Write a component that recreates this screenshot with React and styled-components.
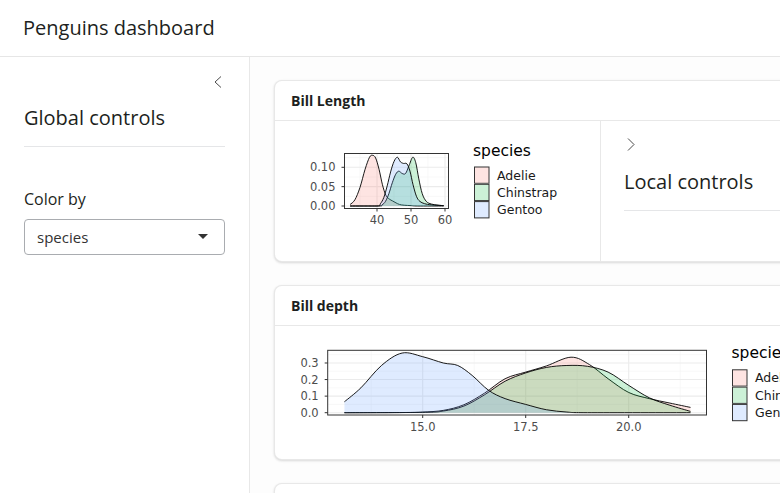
// Penguins dashboard (bslib-style layout with ggplot density charts)
import styled, { createGlobalStyle } from "styled-components";

const COLORS = {
  Adelie: "#F8766D",
  Chinstrap: "#00BA38",
  Gentoo: "#619CFF",
};

const SPECIES = ["Adelie", "Chinstrap", "Gentoo"];

// density curves as [value, density] control points
const billLength = {
  box: { x: 274, y: 121, w: 325, h: 140 },
  x: (v) => 376 + (v - 40) * 3.4,
  y: (d) => 206 - d * 387,
  panel: { x0: 343.5, x1: 447.5, y0: 153.5, y1: 208.5 },
  xMajor: [
    [40, "40"],
    [50, "50"],
    [60, "60"],
  ],
  xMinor: [35, 45, 55],
  yMajor: [
    [0, "0.00"],
    [0.05, "0.05"],
    [0.1, "0.10"],
  ],
  yMinor: [0.025, 0.075, 0.125],
  legend: { titleX: 472, titleY: 155.5, keyX: 473, keyY: 166.5, labelX: 496 },
  series: {
    Adelie: [
      [32.1, 0.004], [33.5, 0.016], [35, 0.048], [36.5, 0.095], [37.8, 0.126],
      [38.7, 0.131], [39.6, 0.124], [40.6, 0.095], [41.6, 0.055], [42.6, 0.028],
      [43.6, 0.018], [44.6, 0.013], [45.6, 0.008], [46.6, 0.004], [48, 0.002],
      [50, 0.001], [52, 0], [59.6, 0],
    ],
    Chinstrap: [
      [32.1, 0], [40.5, 0], [41.5, 0.003], [42.5, 0.012], [43.5, 0.032],
      [44.5, 0.06], [45.5, 0.082], [46.4, 0.09], [47.4, 0.084], [48.4, 0.084],
      [49.4, 0.104], [50.5, 0.126], [51.4, 0.112], [52.3, 0.07], [53.3, 0.032],
      [54.5, 0.012], [56, 0.005], [58, 0.002], [59.6, 0.001],
    ],
    Gentoo: [
      [32.1, 0], [40, 0], [41, 0.006], [42, 0.022], [43, 0.052], [44, 0.088],
      [45, 0.115], [46, 0.126], [46.9, 0.114], [47.8, 0.11], [48.8, 0.109],
      [49.7, 0.09], [50.6, 0.055], [51.6, 0.025], [52.6, 0.012], [54, 0.006],
      [56, 0.003], [59.6, 0.001],
    ],
  },
};

const billDepth = {
  box: { x: 274, y: 325, w: 538, h: 134 },
  x: (v) => 421.7 + (v - 15) * 41.2,
  y: (d) => 411.7 - d * 165.7,
  panel: { x0: 326.7, x1: 705.5, y0: 349.3, y1: 414 },
  xMajor: [
    [15, "15.0"],
    [17.5, "17.5"],
    [20, "20.0"],
  ],
  xMinor: [13.75, 16.25, 18.75, 21.25],
  yMajor: [
    [0, "0.0"],
    [0.1, "0.1"],
    [0.2, "0.2"],
    [0.3, "0.3"],
  ],
  yMinor: [0.05, 0.15, 0.25, 0.35],
  legend: { titleX: 730.5, titleY: 357, keyX: 731, keyY: 368.3, labelX: 754 },
  series: {
    Adelie: [
      [13.1, 0], [14.5, 0.001], [15, 0.004], [15.5, 0.014], [16, 0.048],
      [16.5, 0.118], [17, 0.205], [17.5, 0.245], [18, 0.282], [18.6, 0.335],
      [19.05, 0.29], [19.5, 0.205], [20, 0.122], [20.5, 0.085], [21, 0.058],
      [21.5, 0.032],
    ],
    Chinstrap: [
      [13.1, 0], [15, 0.002], [15.5, 0.01], [16, 0.04], [16.5, 0.108],
      [17, 0.19], [17.5, 0.24], [18, 0.273], [18.5, 0.285], [19, 0.28],
      [19.5, 0.245], [20, 0.165], [20.5, 0.09], [21, 0.045], [21.5, 0.008],
    ],
    Gentoo: [
      [13.1, 0.066], [13.5, 0.15], [14, 0.285], [14.5, 0.36], [15, 0.338],
      [15.5, 0.3], [15.85, 0.285], [16.2, 0.225], [16.6, 0.135], [17, 0.085],
      [17.5, 0.05], [18, 0.018], [18.5, 0.004], [19, 0], [21.5, 0],
    ],
  },
};

const smoothPath = (pts, base) => {
  const f = (n) => n.toFixed(2);
  let d = `M${f(pts[0][0])},${f(pts[0][1])}`;
  for (let i = 0; i < pts.length - 1; i++) {
    const p0 = pts[i - 1] || pts[i];
    const p1 = pts[i];
    const p2 = pts[i + 1];
    const p3 = pts[i + 2] || p2;
    const c1x = p1[0] + (p2[0] - p0[0]) / 6;
    const c1y = Math.min(base, p1[1] + (p2[1] - p0[1]) / 6);
    const c2x = p2[0] - (p3[0] - p1[0]) / 6;
    const c2y = Math.min(base, p2[1] - (p3[1] - p1[1]) / 6);
    d += ` C${f(c1x)},${f(c1y)} ${f(c2x)},${f(c2y)} ${f(p2[0])},${f(p2[1])}`;
  }
  return d;
};

const DensityPlot = ({ spec }) => {
  const { box, x, y, panel, legend } = spec;
  const base = y(0);
  return (
    <PlotSvg
      width={box.w}
      height={box.h}
      viewBox={`${box.x} ${box.y} ${box.w} ${box.h}`}
    >
      <rect
        x={panel.x0}
        y={panel.y0}
        width={panel.x1 - panel.x0}
        height={panel.y1 - panel.y0}
        fill="#fff"
      />
      {spec.xMinor.map((v) => (
        <line key={`xm${v}`} x1={x(v)} x2={x(v)} y1={panel.y0} y2={panel.y1} stroke="#f3f3f3" strokeWidth="0.6" />
      ))}
      {spec.yMinor.map((v) => (
        <line key={`ym${v}`} x1={panel.x0} x2={panel.x1} y1={y(v)} y2={y(v)} stroke="#f3f3f3" strokeWidth="0.6" />
      ))}
      {spec.xMajor.map(([v]) => (
        <line key={`xM${v}`} x1={x(v)} x2={x(v)} y1={panel.y0} y2={panel.y1} stroke="#ebebeb" strokeWidth="1.1" />
      ))}
      {spec.yMajor.map(([v]) => (
        <line key={`yM${v}`} x1={panel.x0} x2={panel.x1} y1={y(v)} y2={y(v)} stroke="#ebebeb" strokeWidth="1.1" />
      ))}

      {SPECIES.map((s) => {
        const pts = spec.series[s].map(([v, d]) => [x(v), y(d)]);
        const line = smoothPath(pts, base);
        const first = pts[0];
        const last = pts[pts.length - 1];
        return (
          <g key={s}>
            <path
              d={`${line} L${last[0]},${base} L${first[0]},${base} Z`}
              fill={COLORS[s]}
              fillOpacity="0.2"
            />
            <path d={line} fill="none" stroke="#000" strokeWidth="0.9" />
          </g>
        );
      })}

      <rect
        x={panel.x0}
        y={panel.y0}
        width={panel.x1 - panel.x0}
        height={panel.y1 - panel.y0}
        fill="none"
        stroke="#333"
        strokeWidth="1"
      />

      {spec.yMajor.map(([v, label]) => (
        <g key={`yl${v}`}>
          <line x1={panel.x0 - 3} x2={panel.x0} y1={y(v)} y2={y(v)} stroke="#333" strokeWidth="1" />
          <AxisText x={panel.x0 - 9} y={y(v) + 4} textAnchor="end">
            {label}
          </AxisText>
        </g>
      ))}
      {spec.xMajor.map(([v, label]) => (
        <g key={`xl${v}`}>
          <line x1={x(v)} x2={x(v)} y1={panel.y1} y2={panel.y1 + 3} stroke="#333" strokeWidth="1" />
          <AxisText x={x(v)} y={panel.y1 + 15.5} textAnchor="middle">
            {label}
          </AxisText>
        </g>
      ))}

      <LegendTitle x={legend.titleX} y={legend.titleY}>
        species
      </LegendTitle>
      {SPECIES.map((s, i) => (
        <g key={`lg${s}`}>
          <rect
            x={legend.keyX}
            y={legend.keyY + i * 17.3}
            width={15.5}
            height={17.3}
            fill="#fff"
          />
          <rect
            x={legend.keyX + 0.5}
            y={legend.keyY + i * 17.3 + 0.5}
            width={14.5}
            height={16.3}
            fill={COLORS[s]}
            fillOpacity="0.2"
            stroke="#333"
            strokeWidth="1"
          />
          <LegendLabel x={legend.labelX} y={legend.keyY + i * 17.3 + 13}>
            {s}
          </LegendLabel>
        </g>
      ))}
    </PlotSvg>
  );
};

const ChevronLeft = () => (
  <ToggleSvg width="8" height="12" viewBox="0 0 8 12">
    <polyline points="7,0.5 1,6 7,11.5" />
  </ToggleSvg>
);

const ChevronRight = () => (
  <ToggleSvg width="8" height="13" viewBox="0 0 8 13">
    <polyline points="1,0.5 7,6.5 1,12.5" />
  </ToggleSvg>
);

const App = () => {
  return (
    <>
      <GlobalStyle />
      <Page>
        <Header>
          <Title>Penguins dashboard</Title>
        </Header>
        <Layout>
          <Sidebar>
            <ToggleRow>
              <ChevronLeft />
            </ToggleRow>
            <SidebarTitle>Global controls</SidebarTitle>
            <Divider />
            <FieldLabel>Color by</FieldLabel>
            <Select>
              <span>species</span>
              <Caret />
            </Select>
          </Sidebar>
          <Main>
            <Card>
              <CardHeader>Bill Length</CardHeader>
              <CardBody $height={140}>
                <PlotArea>
                  <DensityPlot spec={billLength} />
                </PlotArea>
                <InnerSidebar>
                  <InnerToggle>
                    <ChevronRight />
                  </InnerToggle>
                  <SidebarTitle>Local controls</SidebarTitle>
                  <Divider />
                </InnerSidebar>
              </CardBody>
            </Card>
            <Card>
              <CardHeader>Bill depth</CardHeader>
              <CardBody $height={133}>
                <PlotArea>
                  <DensityPlot spec={billDepth} />
                </PlotArea>
              </CardBody>
            </Card>
            <Card>
              <CardHeader>Flipper length</CardHeader>
              <CardBody $height={140} />
            </Card>
          </Main>
        </Layout>
      </Page>
    </>
  );
};

export default App;

const GlobalStyle = createGlobalStyle`
  html, body {
    margin: 0;
    padding: 0;
    overflow: hidden;
    background: #fff;
  }
  body {
    font-family: "Open Sans", "Liberation Sans", sans-serif;
    color: #1d1f21;
  }
`;

const Page = styled.div`
  width: 780px;
  height: 493px;
  display: flex;
  flex-direction: column;
  overflow: hidden;
`;

const Header = styled.header`
  height: 56px;
  flex-shrink: 0;
  display: flex;
  align-items: center;
  padding-left: 23px;
  border-bottom: 1px solid #e6e6e6;
  background: #fff;
`;

const Title = styled.h1`
  margin: 0;
  font-size: 20px;
  font-weight: 400;
  line-height: 24px;
  color: #1d1f21;
`;

const Layout = styled.div`
  flex: 1;
  display: grid;
  grid-template-columns: 250px 1fr;
  min-height: 0;
`;

const Sidebar = styled.aside`
  display: flex;
  flex-direction: column;
  padding: 0 24px;
  border-right: 1px solid #e8e8e8;
  background: #fff;
`;

const ToggleRow = styled.div`
  display: flex;
  justify-content: flex-end;
  padding-right: 3px;
  margin-top: 19px;
  margin-bottom: 18px;
`;

const ToggleSvg = styled.svg`
  display: block;
  fill: none;
  stroke: #4a4a4a;
  stroke-width: 1;
`;

const SidebarTitle = styled.h2`
  margin: 0;
  font-size: 20px;
  font-weight: 400;
  line-height: 24px;
  color: #1d1f21;
  white-space: nowrap;
`;

const Divider = styled.hr`
  margin: 16px 0 0;
  border: 0;
  border-top: 1px solid #e5e6e8;
`;

const FieldLabel = styled.label`
  margin-top: 40px;
  font-size: 16px;
  line-height: 24px;
  color: #1d1f21;
`;

const Select = styled.div`
  margin-top: 8px;
  height: 36px;
  flex-shrink: 0;
  box-sizing: border-box;
  border: 1px solid #a9acb0;
  border-radius: 4px;
  display: flex;
  align-items: center;
  justify-content: space-between;
  padding: 0 16px 0 12px;
  font-size: 15px;
  color: #333;
  background: #fff;
`;

const Caret = styled.span`
  width: 0;
  height: 0;
  border-left: 5.5px solid transparent;
  border-right: 5.5px solid transparent;
  border-top: 5.5px solid #333;
  margin-top: -2px;
`;

const Main = styled.main`
  display: flex;
  flex-direction: column;
  gap: 23px;
  padding: 23px 24px;
  background: #fdfdfd;
  overflow: hidden;
  min-width: 0;
`;

const Card = styled.section`
  width: 540px;
  flex-shrink: 0;
  background: #fff;
  border: 1px solid rgba(0, 0, 0, 0.09);
  border-radius: 8px;
  box-shadow: 0 1px 3px rgba(0, 0, 0, 0.1), 0 1px 2px rgba(0, 0, 0, 0.05);
  overflow: hidden;
`;

const CardHeader = styled.div`
  height: 39px;
  display: flex;
  align-items: center;
  padding: 0 16px;
  border-bottom: 1px solid rgba(0, 0, 0, 0.09);
  font-size: 14px;
  font-weight: 700;
  color: #1d1f21;
`;

const CardBody = styled.div`
  height: ${(p) => p.$height}px;
  display: flex;
`;

const PlotArea = styled.div`
  flex: 1;
  min-width: 0;
  overflow: hidden;
`;

const PlotSvg = styled.svg`
  display: block;
  overflow: hidden;
`;

const AxisText = styled.text`
  font-family: "DejaVu Sans", sans-serif;
  font-size: 11.5px;
  fill: #4d4d4d;
`;

const LegendTitle = styled.text`
  font-family: "DejaVu Sans", sans-serif;
  font-size: 15.5px;
  fill: #000;
`;

const LegendLabel = styled.text`
  font-family: "DejaVu Sans", sans-serif;
  font-size: 12.5px;
  fill: #1a1a1a;
`;

const InnerSidebar = styled.div`
  width: 215px;
  flex-shrink: 0;
  box-sizing: border-box;
  border-left: 1px solid rgba(0, 0, 0, 0.09);
  padding: 0 0 0 23px;
  display: flex;
  flex-direction: column;
`;

const InnerToggle = styled.div`
  display: flex;
  padding-left: 3px;
  margin-top: 17px;
  margin-bottom: 19px;
`;
